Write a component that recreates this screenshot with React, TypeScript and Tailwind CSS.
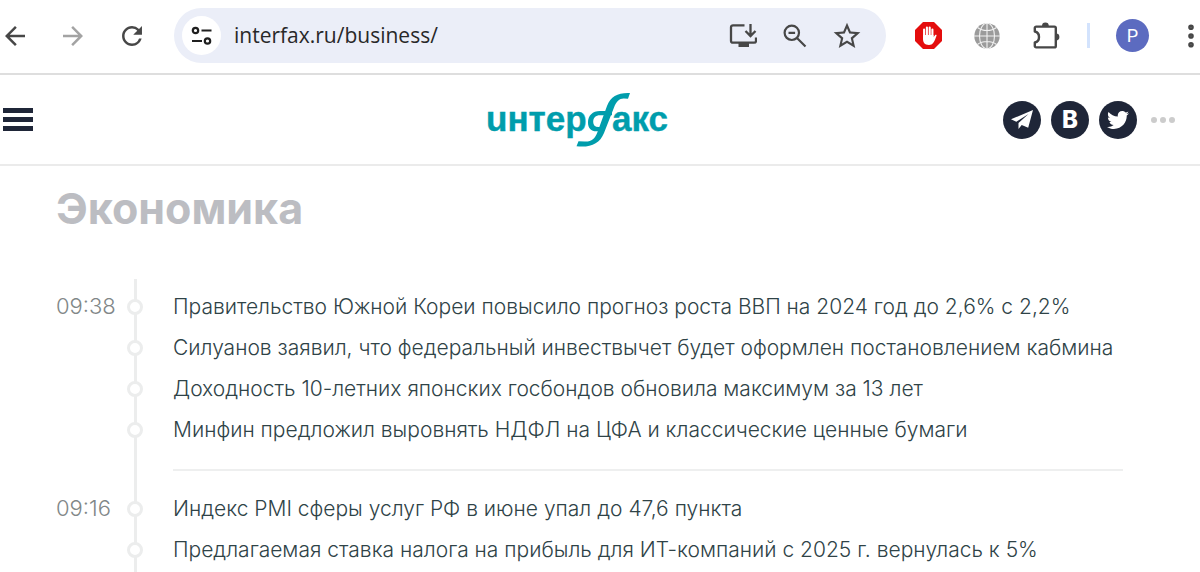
import { MoreVertical } from "lucide-react";
import { MdArrowBack, MdArrowForward, MdRefresh, MdStarBorder } from "react-icons/md";
import { FaTwitter } from "react-icons/fa";

const groups = [
  {
    time: "09:38",
    items: [
      "Правительство Южной Кореи повысило прогноз роста ВВП на 2024 год до 2,6% с 2,2%",
      "Силуанов заявил, что федеральный инвествычет будет оформлен постановлением кабмина",
      "Доходность 10-летних японских госбондов обновила максимум за 13 лет",
      "Минфин предложил выровнять НДФЛ на ЦФА и классические ценные бумаги",
    ],
  },
  {
    time: "09:16",
    items: [
      "Индекс PMI сферы услуг РФ в июне упал до 47,6 пункта",
      "Предлагаемая ставка налога на прибыль для ИТ-компаний с 2025 г. вернулась к 5%",
    ],
  },
];

function SiteInfoIcon() {
  return (
    <svg viewBox="0 0 24 24" className="size-6" fill="none" stroke="#1f1f1f" strokeWidth="2.200">
      <circle cx="5.500" cy="6.500" r="2.700" />
      <path d="M11.500 6.500h10M2 17h10" />
      <circle cx="17.500" cy="17" r="2.700" />
    </svg>
  );
}

function InstallIcon() {
  return (
    <svg viewBox="0 0 28 26" className="h-[26px] w-7" fill="none" stroke="#474747" strokeWidth="2.300">
      <path d="M15.500 2.300H4a2 2 0 0 0-2 2v13.400a2 2 0 0 0 2 2h21a2 2 0 0 0 2-2V14.500" />
      <path d="M21.500 1v11M16.500 8l5 5 5-5" />
      <path d="M9.500 19.500h10.500v4.500H9.500z" fill="#474747" stroke="none" />
    </svg>
  );
}

function ZoomOutIcon() {
  return (
    <svg viewBox="0 0 24 24" className="size-6" fill="none" stroke="#474747" strokeWidth="2.200">
      <circle cx="8.800" cy="8.800" r="7.200" />
      <path d="M14 14l8.500 8.500M5.500 8.800h6.600" />
    </svg>
  );
}

function StopHandIcon() {
  return (
    <svg viewBox="0 0 27 27" className="size-[27px]">
      <path d="M8 0h11l8 8v11l-8 8H8l-8-8V8z" fill="#e40d0d" />
      <g stroke="#fff" strokeWidth="2.100" strokeLinecap="round" fill="none">
        <path d="M9.100 7.500v8M11.900 5.500v9M14.700 5.500v9M17.400 7.500v8" />
      </g>
      <path d="M8 13h10.500v2.200l1.500-2c.6-.8 1.900-.5 1.500.6-.9 2.500-1.700 5-3.200 7-1.100 1.500-2.400 2.200-4.300 2.200-4.500 0-6-3-6-6z" fill="#fff" />
    </svg>
  );
}

function GlobeIcon() {
  return (
    <svg viewBox="0 0 26 26" className="size-[26px]">
      <circle cx="13" cy="13" r="12.700" fill="#9b9b9b" />
      <g fill="none" stroke="#f1f1f1" strokeWidth="1.100">
        <path d="M13 0v26M0 13h26M3.500 4.500c5 4 14 4 19 0M3.500 21.500c5-4 14-4 19 0" />
        <ellipse cx="13" cy="13" rx="7.500" ry="12.700" />
      </g>
    </svg>
  );
}

function PuzzleIcon() {
  return (
    <svg viewBox="0 0 28 28" className="size-7">
      <path d="M2.800 9.500V6a1.400 1.400 0 0 1 1.400-1.400h18.200A1.400 1.400 0 0 1 23.800 6v18a1.400 1.400 0 0 1-1.400 1.400H4.200A1.400 1.400 0 0 1 2.800 24v-3.500c2.700-.5 4.200-2.800 4.200-5.500s-1.500-5-4.200-5.500z" fill="none" stroke="#474747" strokeWidth="2.400" strokeLinejoin="round" />
      <path d="M10 4a3.400 3.400 0 0 1 6.800 0zM24 11.600a3.400 3.400 0 0 1 0 6.800z" fill="#474747" />
      <path d="M1.500 11.500v7c2.500-1.200 2.500-5.800 0-7z" fill="#fff" />
    </svg>
  );
}

function Logo() {
  return (
    <svg viewBox="0 0 184 56" className="h-14 w-[184px] font-['Liberation_Sans',sans-serif] text-[35px] font-bold" fill="#009dac" stroke="#009dac" strokeWidth="0.400" role="img" aria-label="интерфакс">
      <text x="0" y="39">uнтер</text>
      <path d="M126 19h-12c-7.500 0-12 4.500-12 11.500 0 5.500 3 8.800 8.500 8.800h3l1.500-4.300h-2.500c-3.500 0-5.300-2-5.300-5 0-4.500 2.500-6.800 6.800-6.800h12z" stroke="none" />
      <path d="M144 1c-12-.5-19 3-23 13l-9.500 26c-2.500 7-6.500 10-13 9.500l-6-.3-2 5.100c14 1.500 23-2.300 27.500-13.300l10-25.500c2.500-6.500 5.500-9.200 10-9l4 .3z" stroke="none" />
      <text x="126" y="39">акс</text>
    </svg>
  );
}

export default function App() {
  return (
    <div className="h-screen overflow-hidden bg-white font-['Inter',sans-serif]">
      <div className="flex h-[75px] items-start border-b-2 border-[#dedede] pt-2 pl-[3px]">
        <nav className="flex h-[55px] items-center gap-[34px] text-[#474747]">
          <button aria-label="Назад"><MdArrowBack className="size-6 scale-125" /></button>
          <button aria-label="Вперёд" className="text-[#a3a3a3]"><MdArrowForward className="size-6 scale-125" /></button>
          <button aria-label="Обновить"><MdRefresh className="size-[26px] scale-115" /></button>
        </nav>
        <div className="ml-[29px] flex h-[55px] flex-1 items-center rounded-full bg-[#ebeef8] pr-[23px] pl-2">
          <button aria-label="Сведения о сайте" className="flex size-[39px] items-center justify-center rounded-full bg-white">
            <SiteInfoIcon />
          </button>
          <input
            aria-label="Адрес"
            defaultValue="interfax.ru/business/"
            className="ml-[13px] min-w-0 flex-1 bg-transparent font-['Open_Sans',sans-serif] text-[21px] text-[#282828] outline-none"
          />
          <div className="flex items-center gap-6">
            <button aria-label="Установить" className="pr-[2px]"><InstallIcon /></button>
            <button aria-label="Масштаб"><ZoomOutIcon /></button>
            <button aria-label="В закладки" className="text-[#474747]"><MdStarBorder className="size-8" /></button>
          </div>
        </div>
        <div className="ml-[29px] flex h-[55px] items-center">
          <button aria-label="Блокировщик"><StopHandIcon /></button>
          <button aria-label="Сеть" className="ml-8"><GlobeIcon /></button>
          <button aria-label="Расширения" className="ml-8"><PuzzleIcon /></button>
          <span className="ml-[27px] h-[25px] w-[3px] bg-[#d3e3fd]" />
          <button className="ml-[26px] size-[33px] rounded-full bg-[#5c6bc0] font-['Roboto',sans-serif] text-lg text-white">P</button>
          <button aria-label="Меню" className="ml-[27px] -mr-[6px] text-[#474747]"><MoreVertical className="size-[30px]" strokeWidth={2.500} /></button>
        </div>
      </div>

      <header className="grid h-[91px] grid-cols-[1fr_auto_1fr] items-center border-b-2 border-[#ebebeb] pr-[25px] pl-[3px]">
        <button aria-label="Меню сайта" className="flex w-[30px] flex-col gap-1">
          <span className="h-[5px] bg-[#1f2638]" />
          <span className="h-[5px] bg-[#1f2638]" />
          <span className="h-[5px] bg-[#1f2638]" />
        </button>
        <a href="#" className="mr-[22px]"><Logo /></a>
        <div className="flex items-center justify-end gap-[10px]">
          <a href="#" aria-label="Telegram" className="flex size-[38px] items-center justify-center rounded-full bg-[#1f2638]">
            <svg viewBox="0 0 22 20" className="h-5 w-[22px]" fill="#fff">
              <path d="M22 0L0 9.300l5.300 2.400L17.500 4 7.500 13v6l3.200-4 6.500 2.800z" />
            </svg>
          </a>
          <a href="#" aria-label="ВКонтакте" className="flex size-[38px] items-center justify-center rounded-full bg-[#1f2638] text-2xl font-extrabold text-white">B</a>
          <a href="#" aria-label="Twitter" className="flex size-[38px] items-center justify-center rounded-full bg-[#1f2638] text-white"><FaTwitter className="size-[22px]" /></a>
          <button aria-label="Ещё" className="ml-1 flex gap-[3px]">
            <span className="size-[6px] rounded-full bg-[#cccccc]" />
            <span className="size-[6px] rounded-full bg-[#cccccc]" />
            <span className="size-[6px] rounded-full bg-[#cccccc]" />
          </button>
        </div>
      </header>

      <main className="pr-[77px] pl-14">
        <h1 className="pt-[15px] text-[43px] leading-[54px] font-bold text-[#bcbdc2]">Экономика</h1>
        <div className="mt-11">
          {groups.map((group) => (
            <section key={group.time} className="flex">
              <time className="w-[71px] pt-[7px] text-[22px] leading-[41px] font-light text-[#818788]">{group.time}</time>
              <ul className="relative flex-1 pt-[7px] before:absolute before:inset-y-0 before:left-[7px] before:w-[3px] before:bg-[#eceded]">
                {group.items.map((item) => (
                  <li key={item} className="relative flex h-[41px] items-center gap-[30px]">
                    <span className="size-4 shrink-0 rounded-full border-[3px] border-[#eceded] bg-white" />
                    <a href="#" className="text-[21px] font-light whitespace-nowrap text-[#2f4347]">{item}</a>
                  </li>
                ))}
                <li className="mt-[19px] ml-[46px] h-[2px] bg-[#eeefef]" role="separator" />
                <li className="h-[10px]" role="presentation" />
              </ul>
            </section>
          ))}
        </div>
      </main>
    </div>
  );
}
